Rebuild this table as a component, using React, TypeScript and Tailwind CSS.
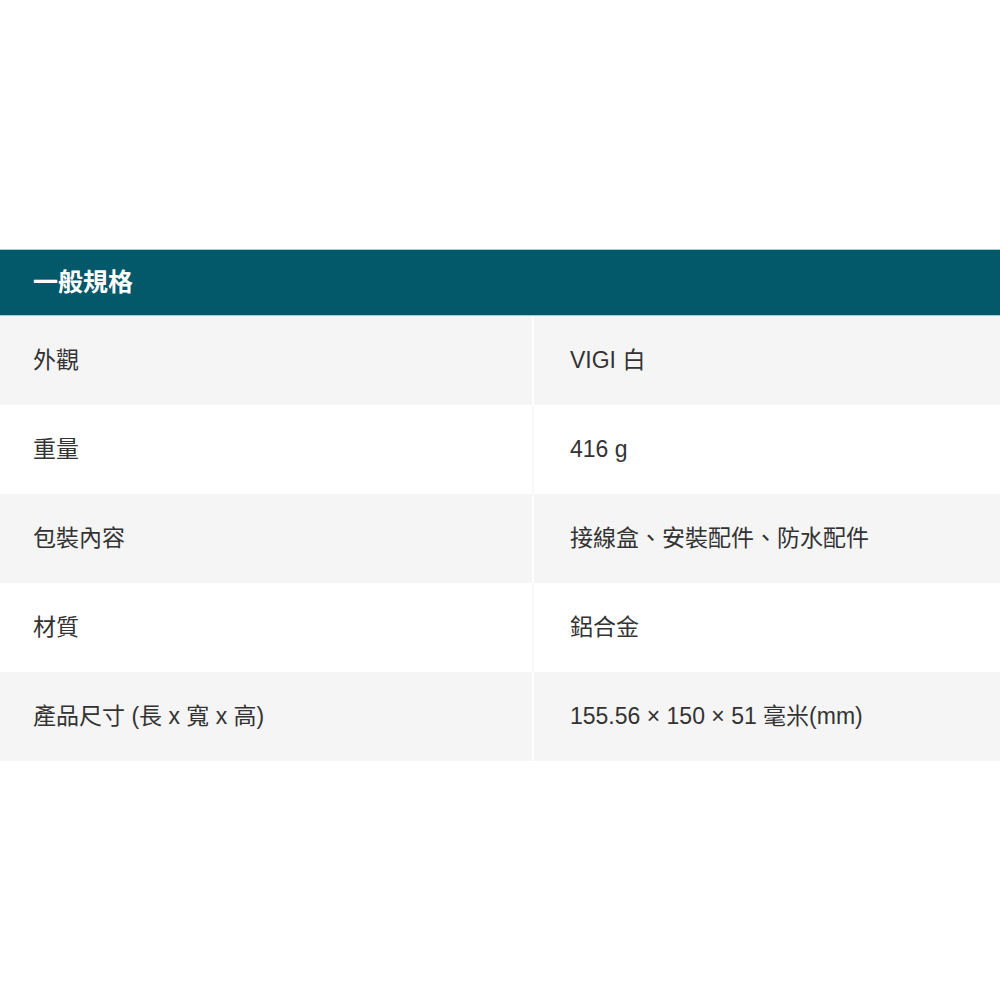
import React from "react";

const rows: [string, string][] = [
  ["外觀", "VIGI 白"],
  ["重量", "416 g"],
  ["包裝內容", "接線盒、安裝配件、防水配件"],
  ["材質", "鋁合金"],
  ["產品尺寸 (長 x 寬 x 高)", "155.56 × 150 × 51 毫米(mm)"],
];

export default function App() {
  return (
    <div
      className="w-[1000px] h-[1000px] bg-white text-[#333333]"
      style={{ fontFamily: '"Liberation Sans", "Noto Sans CJK TC", sans-serif' }}
    >
      <div className="h-[249px]" />
      <div className="h-[67px] bg-[#03586a] border-t border-b border-[#9fcfd6] flex items-center pl-[33px]">
        <span className="text-white font-bold text-[25px]">一般規格</span>
      </div>
      {rows.map(([k, v], i) => (
        <div
          key={k}
          className={`flex h-[89px] ${i % 2 === 0 ? "bg-[#f5f5f5]" : "bg-white"}`}
        >
          <div className="w-[532px] flex items-center pl-[33px] text-[23px]">{k}</div>
          <div className={`w-[2px] ${i % 2 === 0 ? "bg-[#fdfdfd]" : "bg-[#f8f8f8]"}`} />
          <div className="flex-1 flex items-center pl-[36px] text-[23px]">{v}</div>
        </div>
      ))}
    </div>
  );
}
